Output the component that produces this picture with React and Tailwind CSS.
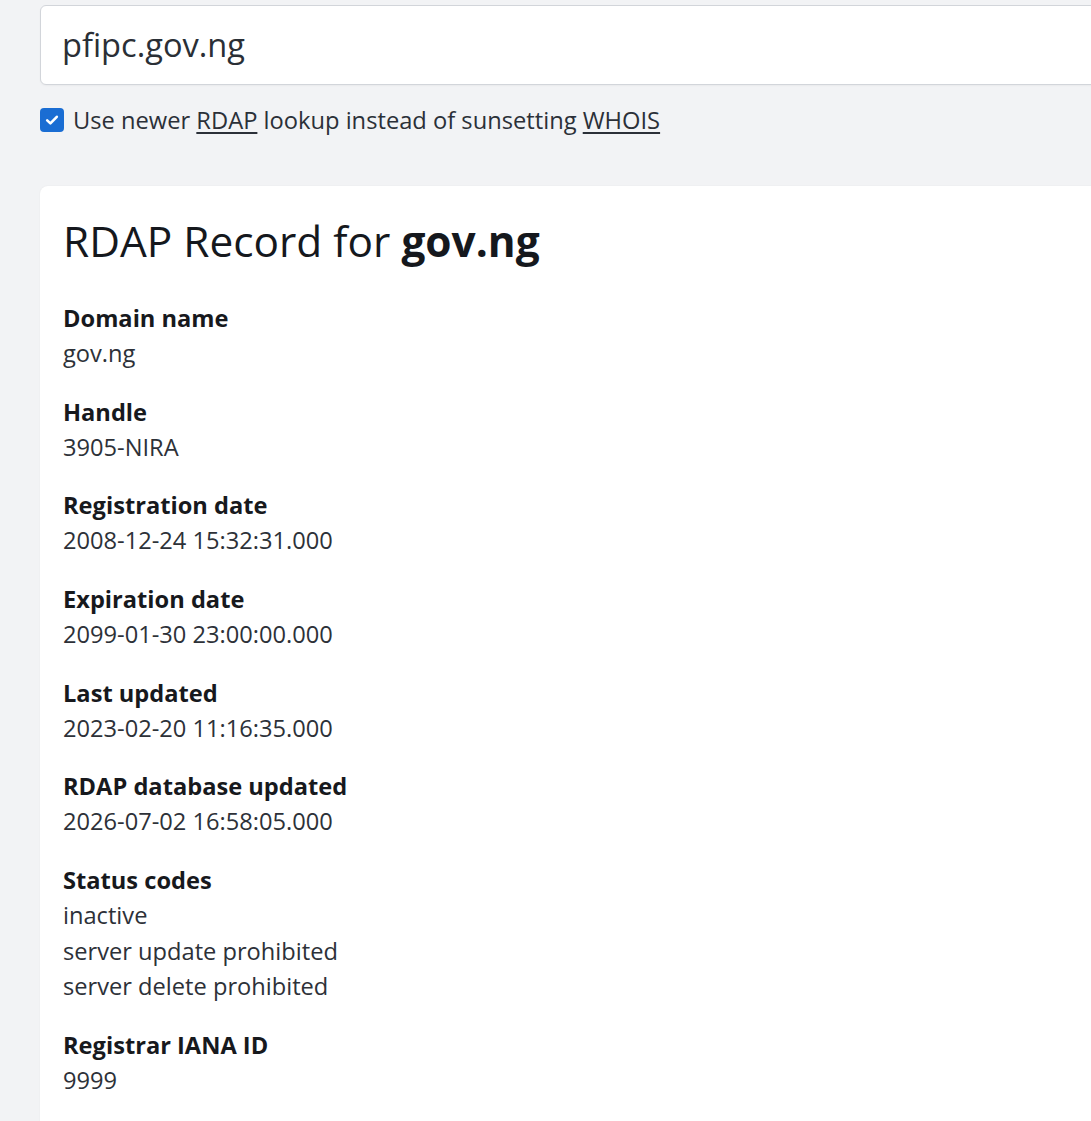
import React from "react";

const rows = [
  ["Domain name", ["gov.ng"]],
  ["Handle", ["3905-NIRA"]],
  ["Registration date", ["2008-12-24 15:32:31.000"]],
  ["Expiration date", ["2099-01-30 23:00:00.000"]],
  ["Last updated", ["2023-02-20 11:16:35.000"]],
  ["RDAP database updated", ["2026-07-02 16:58:05.000"]],
  ["Status codes", ["inactive", "server update prohibited", "server delete prohibited"]],
  ["Registrar IANA ID", ["9999"]],
];

export default function App() {
  return (
    <div
      className="min-h-[1121px] w-full overflow-hidden bg-[#f2f3f5]"
      style={{ fontFamily: '"Open Sans", "Noto Sans", sans-serif' }}
    >
      <div className="w-[1200px] pl-[40px] pt-[5px]">
        <div className="flex h-[80px] items-center rounded-[6px] border border-[#d2d5da] bg-white pl-[21px] text-[32.6px] text-[#2a2f36] shadow-[0_1px_2px_rgba(0,0,0,0.04)]">
          pfipc.gov.ng
        </div>
        <label className="mt-[19px] flex items-center gap-[9px] text-[23.7px] leading-[32px] text-[#2b3038]">
          <span className="flex h-[24px] w-[24px] items-center justify-center rounded-[4px] bg-[#1a6dd3]">
            <svg width="16" height="16" viewBox="0 0 16 16" fill="none">
              <path d="M3.2 8.4 6.4 11.4 12.8 4.8" stroke="white" strokeWidth="2.6" strokeLinecap="round" strokeLinejoin="round" />
            </svg>
          </span>
          <span>
            Use newer <span className="underline underline-offset-[3px]">RDAP</span> lookup instead of sunsetting{" "}
            <span className="underline underline-offset-[3px]">WHOIS</span>
          </span>
        </label>
        <div className="mt-[50px] rounded-[8px] bg-white px-[23px] pb-[40px] pt-[30px] shadow-[0_0_2px_rgba(0,0,0,0.06)]">
          <h1 className="text-[42.4px] font-medium leading-[50px] text-[#15181d]">
            RDAP Record for <span className="font-bold">gov.ng</span>
          </h1>
          <div className="mt-[34px] flex flex-col gap-[22.1px]">
            {rows.map(([label, values]) => (
              <div key={label}>
                <div className="text-[23.65px] font-bold leading-[36px] text-[#17191d]">{label}</div>
                {values.map((v) => (
                  <div key={v} className="text-[23.65px] leading-[35.6px] text-[#2d3138]">
                    {v}
                  </div>
                ))}
              </div>
            ))}
          </div>
        </div>
      </div>
    </div>
  );
}
